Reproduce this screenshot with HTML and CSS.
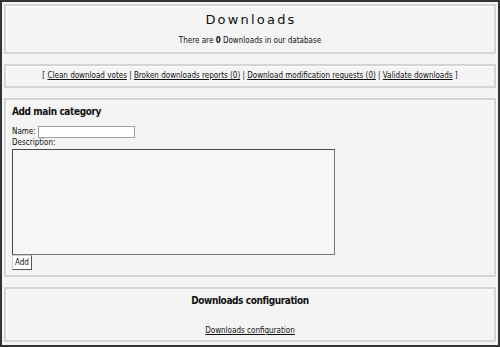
FILE: index.html
```html
<!DOCTYPE html>
<html lang="en">
<head>
    <meta charset="UTF-8">
    <title>Downloads</title>
    <link rel="stylesheet" href="styles.css">
</head>
<body>
    <div id="frame">
        <div class="panel head">
            <h1>Downloads</h1>
            <p>There are <b>0</b> Downloads in our database</p>
        </div>

        <div class="panel links">
            [ <a href="#">Clean download votes</a> | <a href="#">Broken downloads reports (0)</a> | <a href="#">Download modification requests (0)</a> | <a href="#">Validate downloads</a> ]
        </div>

        <div class="panel cat">
            <h2>Add main category</h2>
            <form>
                <div class="row">
                    <label for="catName">Name:</label>
                    <input type="text" id="catName" name="name">
                </div>
                <label for="catDesc" class="desc">Description:</label>
                <textarea id="catDesc" name="description"></textarea>
                <button type="submit">Add</button>
            </form>
        </div>

        <div class="panel conf">
            <h2>Downloads configuration</h2>
            <a href="#">Downloads configuration</a>
        </div>
    </div>
</body>
</html>
```

FILE: styles.css
```css
html, body {
    margin: 0;
    padding: 0;
}

body {
    font-family: "DejaVu Sans Condensed", "DejaVu Sans", Tahoma, sans-serif;
    font-size: 8px;
    line-height: 10px;
    color: #111111;
    background-color: #333333;
    height: 347px;
    overflow: hidden;
}

#frame {
    width: 496px;
    height: 343px;
    margin: 2px;
    background-color: #f4f4f4;
    padding: 2px;
    box-sizing: border-box;
    display: flex;
    flex-direction: column;
    gap: 10px;
}

.panel {
    border: 2px solid #d4d4d4;
    background-color: #f4f4f4;
    box-shadow: inset 1px 1px 0 #fcfcfc;
    box-sizing: border-box;
}

a {
    color: #111111;
}

.head {
    height: 50px;
    text-align: center;
    padding-top: 6px;
}

.head h1 {
    margin: 0;
    font-family: "DejaVu Sans", Verdana, sans-serif;
    font-size: 13px;
    line-height: 16px;
    font-weight: normal;
    letter-spacing: 2.2px;
    padding-left: 2px;
}

.head p {
    margin: 8px 0 0;
}

.links {
    height: 24px;
    text-align: center;
    padding-top: 5px;
}

.cat {
    height: 179px;
    padding: 6px 6px 0;
}

.cat h2,
.conf h2 {
    font-size: 10px;
    line-height: 12px;
    letter-spacing: -0.4px;
}

.cat h2 {
    margin: 0;
}

.cat .row {
    display: flex;
    align-items: center;
    gap: 2px;
    height: 12px;
    margin-top: 8px;
}

.cat label {
    display: block;
}

.cat .desc {
    margin-bottom: 1px;
}

.cat input {
    width: 97px;
    height: 12px;
    box-sizing: border-box;
    border: 1px solid #a0a0a0;
    background: #ffffff;
    padding: 0;
    margin: 0;
}

.cat textarea {
    display: block;
    width: 323px;
    height: 106px;
    box-sizing: border-box;
    border: 1px solid #4a4a4a;
    border-right-color: #777777;
    border-bottom-color: #777777;
    background: #f6f6f6;
    resize: none;
    margin: 0;
}

.cat button {
    display: block;
    height: 15px;
    font-family: inherit;
    font-size: 8px;
    line-height: 10px;
    padding: 0 2px;
    margin: 0;
    border: 1px solid #d0d0d0;
    border-right-color: #555555;
    border-bottom-color: #555555;
    background: #ffffff;
    color: #111111;
}

.conf {
    height: 55px;
    text-align: center;
    padding-top: 6px;
}

.conf h2 {
    margin: 0 0 19px;
}

.conf a {
    display: block;
}
```
